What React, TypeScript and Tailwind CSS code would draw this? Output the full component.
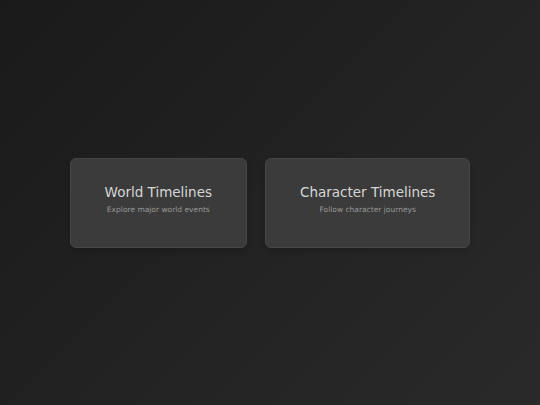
export default function App() {
  const cards = [
    { title: 'World Timelines', sub: 'Explore major world events' },
    { title: 'Character Timelines', sub: 'Follow character journeys' },
  ];

  return (
    <div className="w-full h-[405px] flex items-center justify-center bg-[linear-gradient(135deg,#1a1a1a_0%,#222222_50%,#2a2a2a_100%)] font-['DejaVu_Sans',sans-serif]">
      <div className="flex gap-[18px]">
        {cards.map((c) => (
          <div
            key={c.title}
            className="h-[90px] px-[34px] pt-[25px] rounded-md bg-[#3b3b3b] border border-[#464646] shadow-md flex flex-col items-center"
          >
            <h2 className="text-[13.5px] leading-[16px] text-[#d6d6d6]">{c.title}</h2>
            <p className="mt-[5px] text-[7.5px] leading-[10px] text-[#999999]">{c.sub}</p>
          </div>
        ))}
      </div>
    </div>
  );
}
